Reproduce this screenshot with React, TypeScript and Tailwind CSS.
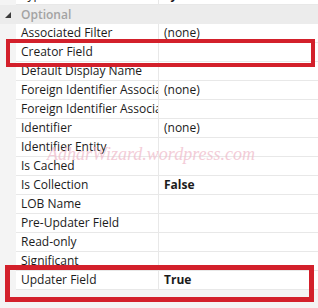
const rows: { name: string; value?: string; bold?: boolean }[] = [
  { name: "Associated Filter", value: "(none)" },
  { name: "Creator Field" },
  { name: "Default Display Name" },
  { name: "Foreign Identifier Association", value: "(none)" },
  { name: "Foreign Identifier Association" },
  { name: "Identifier", value: "(none)" },
  { name: "Identifier Entity" },
  { name: "Is Cached" },
  { name: "Is Collection", value: "False", bold: true },
  { name: "LOB Name" },
  { name: "Pre-Updater Field" },
  { name: "Read-only" },
  { name: "Significant" },
  { name: "Updater Field", value: "True", bold: true },
]

const Row = ({ name, value, bold }: { name: string; value?: string; bold?: boolean }) => {
  return (
    <div className="flex h-[19px]">
      <div className="w-[16px] shrink-0" />
      <div className="w-[143px] shrink-0 bg-white border-b border-r border-[#e8e8e8] pl-[5px] overflow-hidden whitespace-nowrap leading-[18px]">
        {name}
      </div>
      <div className={`flex-1 bg-white border-b border-[#e8e8e8] pl-[5px] whitespace-nowrap leading-[18px] ${bold ? "font-bold" : ""}`}>
        {value}
      </div>
    </div>
  )
}

export default function App() {
  return (
    <div
      className="relative w-[318px] h-[308px] overflow-hidden bg-[#f4f4f4] text-[12px] text-[#1b1b1b]"
      style={{ fontFamily: '"Open Sans", "Noto Sans", sans-serif' }}
    >
      <div className="flex flex-col -mt-[14px]">
        <Row name="Type Name" value="SystemName" bold />
        <div className="flex items-center h-[19px] bg-[#ececec]">
          <div className="w-[16px] shrink-0 flex justify-center">
            <svg width="6" height="6" viewBox="0 0 6 6">
              <polygon points="6,0 6,6 0,6" fill="#3c3c3c" />
            </svg>
          </div>
          <span className="pl-[5px] font-semibold text-[#a3a3a3]">Optional</span>
        </div>
        {rows.map((r, i) => (
          <Row key={i} {...r} />
        ))}
      </div>

      <div
        className="absolute left-[47px] top-[141px] text-[18px] italic text-[#f0bccb] opacity-75 pointer-events-none whitespace-nowrap"
        style={{ fontFamily: '"Liberation Serif", serif' }}
      >
        AdharWizard.wordpress.com
      </div>

      <div className="absolute left-[6px] top-[39px] w-[309px] h-[28px] border-[4px] border-[#d3202b]" />
      <div className="absolute left-[5px] top-[265px] w-[309px] h-[37px] border-[5px] border-[#d3202b]" />
    </div>
  )
}
